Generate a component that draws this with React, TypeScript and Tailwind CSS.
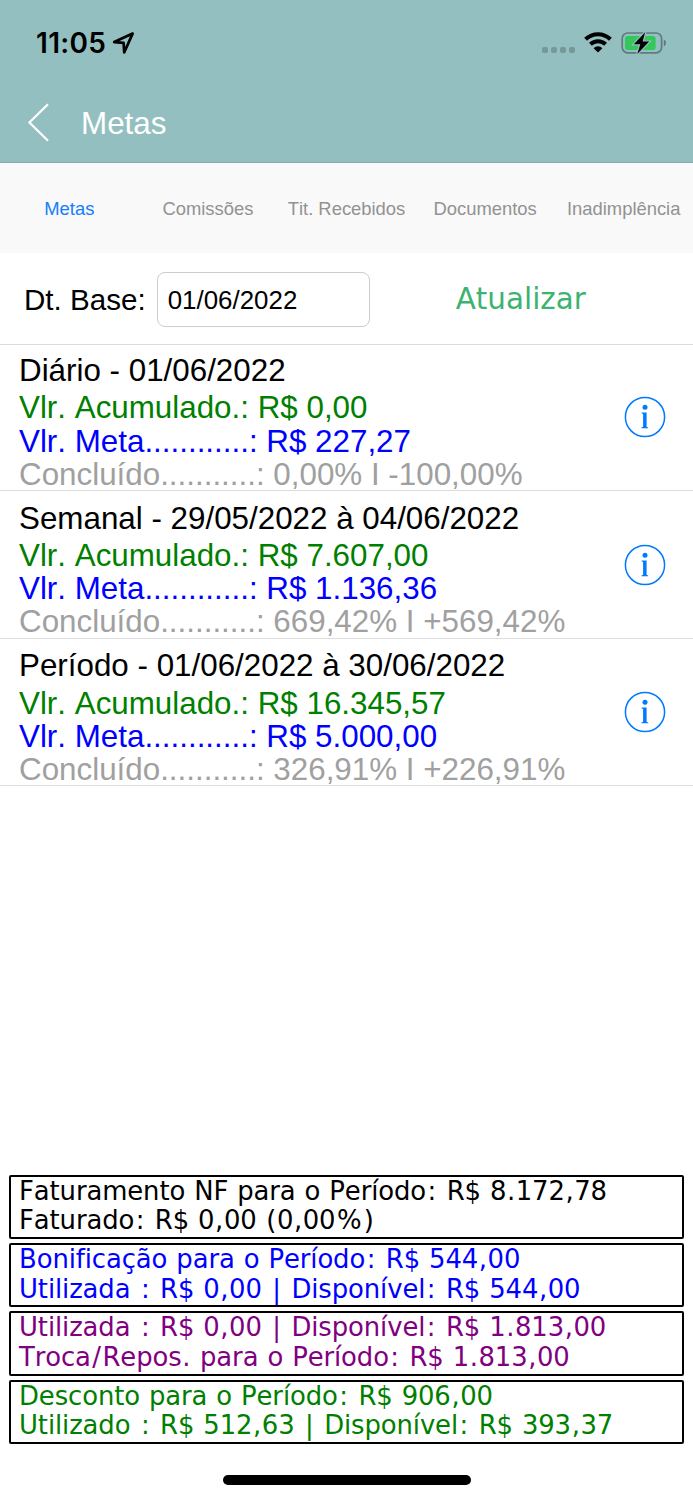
import React from 'react';

const GOALS = [
  {
    title: 'Diário - 01/06/2022',
    total: 'R$ 0,00',
    goal: 'R$ 227,27',
    done: '0,00% I -100,00%',
  },
  {
    title: 'Semanal - 29/05/2022 à 04/06/2022',
    total: 'R$ 7.607,00',
    goal: 'R$ 1.136,36',
    done: '669,42% I +569,42%',
  },
  {
    title: 'Período - 01/06/2022 à 30/06/2022',
    total: 'R$ 16.345,57',
    goal: 'R$ 5.000,00',
    done: '326,91% I +226,91%',
  },
];

const TABS = ['Metas', 'Comissões', 'Tit. Recebidos', 'Documentos', 'Inadimplência'];

const SUMMARY = [
  {
    color: 'text-black',
    lines: ['Faturamento NF para o Período: R$ 8.172,78', 'Faturado: R$ 0,00 (0,00%)'],
  },
  {
    color: 'text-[#0000ff]',
    lines: ['Bonificação para o Período: R$ 544,00', 'Utilizada : R$ 0,00 | Disponível: R$ 544,00'],
  },
  {
    color: 'text-[#800080]',
    lines: ['Utilizada : R$ 0,00 | Disponível: R$ 1.813,00', 'Troca/Repos. para o Período: R$ 1.813,00'],
  },
  {
    color: 'text-[#008000]',
    lines: ['Desconto para o Período: R$ 906,00', 'Utilizado : R$ 512,63 | Disponível: R$ 393,37'],
  },
];

// Punctuation gets a little more room than the font gives it
const punctClass = (char: string) => {
  if (char === ':' || char === '|' || char === '/') return 'px-[0.058em]';
  if (char === '%') return 'px-[0.063em]';
  return 'px-[0.025em]';
};

const SummaryLine: React.FC<{ text: string }> = ({ text }) => (
  <p>
    {text.split(/([:|/%.,()])/).map((part, index) =>
      index % 2 === 1 ? (
        <span key={index} className={punctClass(part)}>{part}</span>
      ) : (
        part
      )
    )}
  </p>
);

const InfoIcon: React.FC = () => (
  <svg className="mt-[1px] h-[42px] w-[42px]" viewBox="0 0 42 42">
    <circle cx="21" cy="21" r="19.6" fill="none" stroke="#007aff" strokeWidth="1.5" />
    <circle cx="21" cy="11.3" r="2.5" fill="#007aff" />
    <path d="M17.6 16.6h5v13.7c0 .7.4 1 1.6 1.1v.8h-6.8v-.8c1.2-.1 1.7-.4 1.7-1.1V18.5c0-.7-.5-1-1.5-1.1z" fill="#007aff" />
  </svg>
);

const StatusBar: React.FC = () => (
  <div className="flex h-[84px] items-center justify-between pl-[36px] pr-[26px] pt-[1px]">
    <div className="flex items-center">
      <span className="font-['Inter',sans-serif] text-[28px] font-semibold leading-none tracking-[0.3px]">11:05</span>
      <svg className="ml-[6px] h-[24px] w-[24px]" viewBox="0 0 24 24">
        <path d="M20.6 2.6 2.2 11.1l9.4.8.6 9.6z" fill="none" stroke="#000" strokeWidth="2.7" strokeLinejoin="round" />
      </svg>
    </div>
    <div className="flex items-center">
      <div className="mt-[14px] flex gap-[3px]">
        <span className="h-[6px] w-[6px] rounded-[2px] bg-[#769899]" />
        <span className="h-[6px] w-[6px] rounded-[2px] bg-[#769899]" />
        <span className="h-[6px] w-[6px] rounded-[2px] bg-[#769899]" />
        <span className="h-[6px] w-[6px] rounded-[2px] bg-[#769899]" />
      </div>
      <svg className="ml-[9px] h-[21px] w-[28px]" viewBox="0 0 28 21">
        <path d="M1.6 7.3a17.6 17.6 0 0 1 24.8 0" fill="none" stroke="#000" strokeWidth="4.1" />
        <path d="M6.4 12.3a10.9 10.9 0 0 1 15.2 0" fill="none" stroke="#000" strokeWidth="4" />
        <path d="M14 20.6 9.6 16.2a6.2 6.2 0 0 1 8.8 0z" fill="#000" />
      </svg>
      <svg className="ml-[9px] h-[24px] w-[46px]" viewBox="0 0 46 24">
        <rect x="1.2" y="2" width="39.4" height="19.8" rx="5.5" fill="none" stroke="#5f7b7c" strokeWidth="1.7" />
        <path d="M42.8 8.6c2.9.9 2.9 5.9 0 6.8z" fill="#5f7b7c" />
        <rect x="4" y="5" width="30.6" height="14" rx="2.8" fill="#34c759" />
        <path d="M24.2 1.2 12.8 13.3h6.5l-3 9.6 11.9-12.3h-6.6z" fill="#000" stroke="#94bfc0" strokeWidth="2.4" paintOrder="stroke" />
      </svg>
    </div>
  </div>
);

const App: React.FC = () => {
  return (
    <div className="flex h-[1500px] w-[693px] flex-col overflow-hidden bg-white font-['Liberation_Sans',sans-serif] text-black [font-kerning:none]">
      <header className="h-[163px] border-b border-[#84a9aa] bg-[#94bfc0]">
        <StatusBar />
        <div className="flex h-[76px] items-center pl-[27px]">
          <svg className="h-[40px] w-[23px]" viewBox="0 0 23 40">
            <path d="M21 2.3 2.4 20.5 21 38.7" fill="none" stroke="#fff" strokeWidth="2.2" />
          </svg>
          <h1 className="ml-[31px] pt-[4px] text-[31.4px] leading-none text-white">Metas</h1>
        </div>
      </header>

      <nav className="grid h-[90px] grid-cols-5 items-center bg-[#f9f9f9] pt-[2px] text-center text-[18.4px]">
        {TABS.map((tab, index) => (
          <button key={tab} className={`whitespace-nowrap ${index === 0 ? 'text-[#157efb]' : 'text-[#929292]'}`}>
            {tab}
          </button>
        ))}
      </nav>

      <div className="flex h-[92px] items-center border-b border-[#dcdcdc] pl-[24px] pt-[2px]">
        <label className="text-[29.6px] leading-none">Dt. Base:</label>
        <div className="ml-[11px] flex h-[55px] w-[213px] items-center rounded-[8px] border-[1.5px] border-[#cccccc] pl-[10px] pt-[2px] text-[25.9px]">
          01/06/2022
        </div>
        <button className="ml-[86px] font-['DejaVu_Sans',sans-serif] text-[29.4px] leading-none text-[#3cb371]">
          Atualizar
        </button>
      </div>

      <div className="-mt-[1.7px]">
        {GOALS.map((item) => (
          <div
            key={item.title}
            className="flex h-[147.6px] items-center justify-between border-b border-[#dcdcdc] pl-[19px] pr-[27px]"
          >
            <div className="whitespace-nowrap pt-[12px] text-[31.35px] leading-[33.2px]">
              <p className="pb-[4px]">{item.title}</p>
              <p className="text-[#008000]">Vlr. Acumulado.: {item.total}</p>
              <p className="text-[#0000ff]">Vlr. Meta............: {item.goal}</p>
              <p className="text-[#a0a0a0]">Concluído...........: {item.done}</p>
            </div>
            <InfoIcon />
          </div>
        ))}
      </div>

      {/* Totals of the period */}
      <footer className="mt-auto flex flex-col items-center">
        <div className="flex w-full flex-col gap-[4px] px-[9px] font-['DejaVu_Sans',sans-serif] text-[25.9px] leading-[29.6px] tracking-[-0.11px] [font-variant-ligatures:none] [word-spacing:0.034em]">
          {SUMMARY.map((box) => (
            <div
              key={box.lines[0]}
              className={`h-[64.3px] whitespace-nowrap rounded-[2px] border-2 border-black pl-[8px] ${box.color}`}
            >
              {box.lines.map((line) => (
                <SummaryLine key={line} text={line} />
              ))}
            </div>
          ))}
        </div>
        <div className="mb-[15px] mt-[31px] h-[10px] w-[248px] rounded-full bg-black" />
      </footer>
    </div>
  );
};

export default App;
